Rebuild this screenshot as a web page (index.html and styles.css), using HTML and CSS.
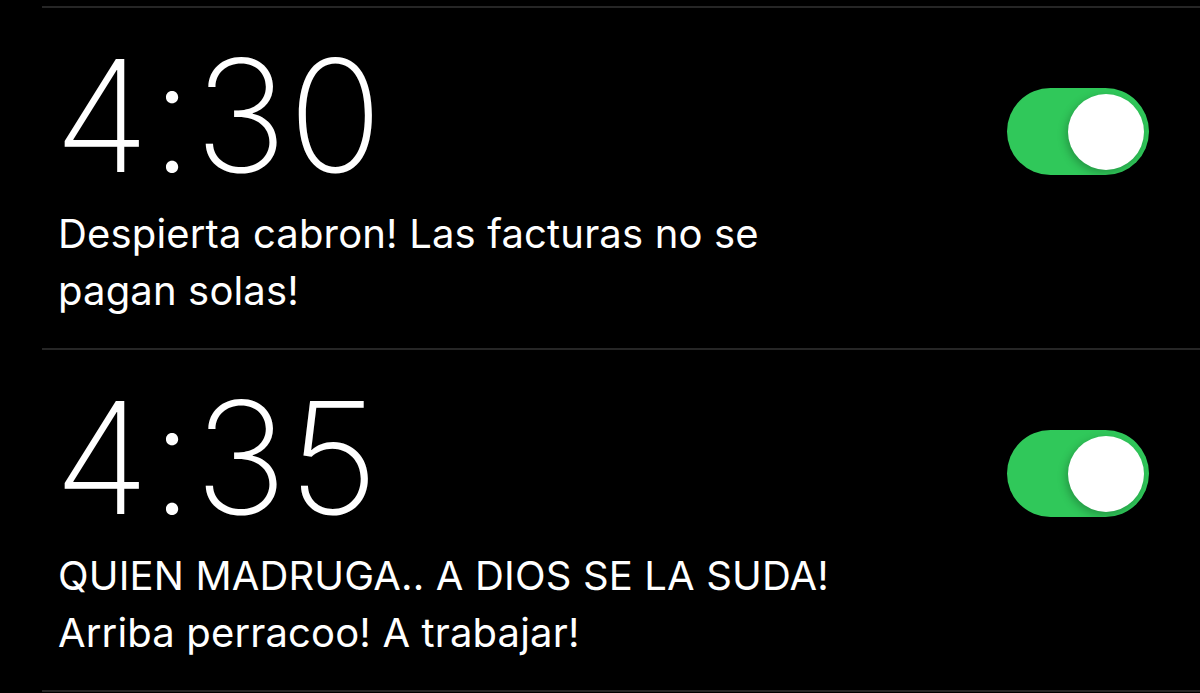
FILE: index.html
```html
<!DOCTYPE html>
<html lang="es">
<head>
<meta charset="utf-8">
<title>Alarmas</title>
<link rel="stylesheet" href="styles.css">
</head>
<body>
  <ul class="alarm-list">
    <li class="alarm">
      <div class="alarm-info">
        <div class="alarm-time">4:30</div>
        <div class="alarm-label">Despierta cabron! Las facturas no se<br>pagan solas!</div>
      </div>
      <div class="toggle is-on"><span class="knob"></span></div>
    </li>
    <li class="alarm">
      <div class="alarm-info">
        <div class="alarm-time">4:35</div>
        <div class="alarm-label">QUIEN MADRUGA.. A DIOS SE LA SUDA!<br>Arriba perracoo! A trabajar!</div>
      </div>
      <div class="toggle is-on"><span class="knob"></span></div>
    </li>
  </ul>
</body>
</html>
```

FILE: styles.css
```css
html, body {
  margin: 0;
  padding: 0;
  background: #000;
  height: 100%;
  overflow: hidden;
}

body {
  font-family: Inter, "Noto Sans", sans-serif;
  color: #fff;
}

.alarm-list {
  list-style: none;
  margin: 0;
  padding: 6px 0 0 42px;
}

.alarm {
  display: flex;
  align-items: flex-start;
  justify-content: space-between;
  border-top: 2px solid #262626;
  padding: 0 51px 0 16px;
  height: 340px;
}

.alarm:last-child {
  border-bottom: 2px solid #262626;
}

.alarm-time {
  font-size: 156px;
  line-height: 156px;
  font-weight: 250;
  margin-top: 30px;
  margin-left: -4px;
  letter-spacing: 1px;
}

.alarm-label {
  font-size: 40px;
  line-height: 57px;
  font-weight: 400;
  margin-top: 11px;
  letter-spacing: 0.15px;
}

.toggle {
  width: 142px;
  height: 87px;
  border-radius: 44px;
  background: #30c85a;
  margin-top: 80px;
  display: flex;
  align-items: center;
  justify-content: flex-end;
  padding: 0 5px;
  box-sizing: border-box;
  flex-shrink: 0;
}

.knob {
  width: 76px;
  height: 76px;
  border-radius: 50%;
  background: #fff;
  box-shadow: -2px 3px 8px rgba(0, 0, 0, 0.25);
}
```
